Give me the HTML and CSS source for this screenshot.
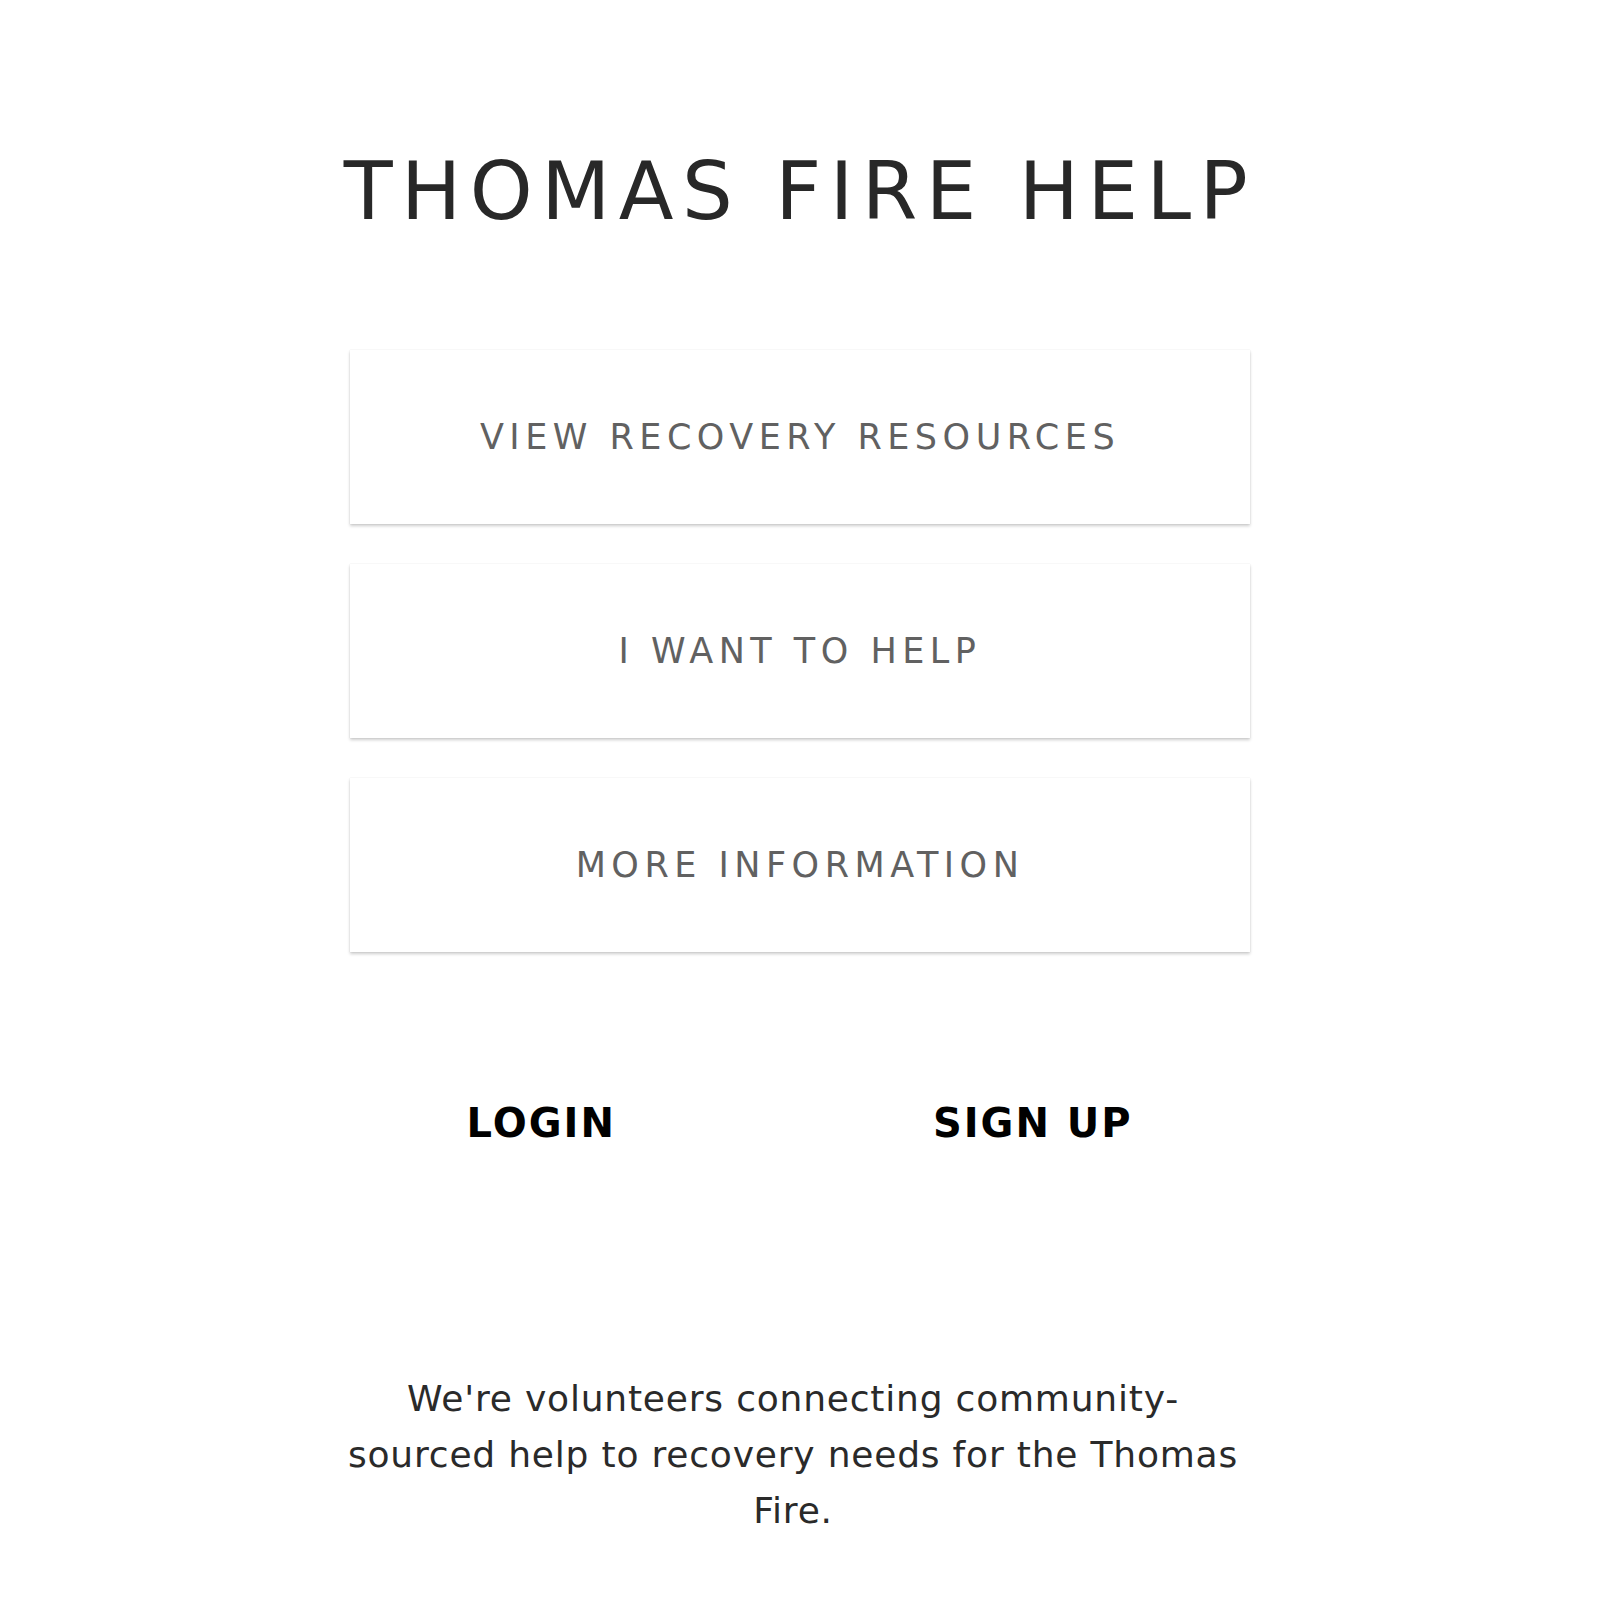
FILE: index.html
```html
<!DOCTYPE html>
<html lang="en">
<head>
<meta charset="utf-8">
<title>Thomas Fire Help</title>
<link rel="stylesheet" href="styles.css">
</head>
<body>
<main class="page">
  <h1 class="title">THOMAS FIRE HELP</h1>
  <nav class="cards">
    <a class="card" href="#">VIEW RECOVERY RESOURCES</a>
    <a class="card" href="#">I WANT TO HELP</a>
    <a class="card" href="#">MORE INFORMATION</a>
  </nav>
  <div class="auth">
    <a class="auth-link" href="#">LOGIN</a>
    <a class="auth-link" href="#">SIGN UP</a>
  </div>
  <p class="about">We're volunteers connecting community-sourced help to recovery needs for the Thomas Fire.</p>
</main>
</body>
</html>
```
FILE: styles.css
```css
html, body {
  margin: 0;
  padding: 0;
  background: #ffffff;
}

body {
  font-family: "DejaVu Sans", "Liberation Sans", sans-serif;
}

.page {
  width: 900px;
  margin: 0 auto;
  padding-top: 152px;
}

.title {
  margin: 0 -50px 118px -50px;
  font-size: 80px;
  line-height: 80px;
  font-weight: 400;
  letter-spacing: 8.5px;
  text-align: center;
  color: #282828;
  white-space: nowrap;
}

.cards {
  display: flex;
  flex-direction: column;
  gap: 40px;
}

.card {
  height: 174px;
  display: flex;
  align-items: center;
  justify-content: center;
  background: #ffffff;
  box-shadow: 0 2px 3px rgba(0, 0, 0, 0.2), 0 0 1px rgba(0, 0, 0, 0.12);
  color: #616161;
  font-size: 35px;
  letter-spacing: 5.5px;
  text-decoration: none;
}

.auth {
  display: flex;
  justify-content: center;
  gap: 109px;
  padding-right: 26px;
  margin-top: 151px;
}

.auth-link {
  width: 420px;
  text-align: center;
  font-size: 40px;
  line-height: 40px;
  font-weight: 700;
  letter-spacing: 2px;
  color: #000000;
  text-decoration: none;
}

.about {
  margin: 228px 0 0 -14px;
  font-size: 36px;
  line-height: 56px;
  letter-spacing: 0.8px;
  text-align: center;
  color: #2a2a2a;
}
```
